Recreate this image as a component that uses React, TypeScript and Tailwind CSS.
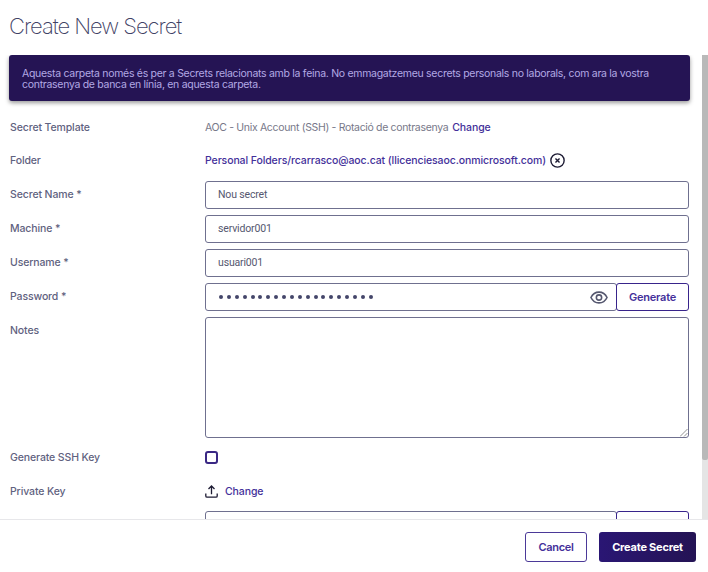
import type { ReactNode } from "react";

function Row({ label, className, children }: { label?: string; className: string; children: ReactNode }) {
  return (
    <div className={`flex shrink-0 ${className}`}>
      <div className="w-[195px] shrink-0 text-[10.500px] leading-[28px] font-medium tracking-[-0.12px] text-[#5f6280]">{label}</div>
      <div className="flex min-w-0 flex-1 items-center">{children}</div>
    </div>
  );
}

const box = "rounded-[3px] border border-[#6f708f] bg-white";

function TextField({ value }: { value: string }) {
  return (
    <div className={`flex h-7 w-full items-center px-3 font-[Roboto,sans-serif] text-[10.500px] tracking-[-0.16px] text-[#55576f] ${box}`}>
      {value}
    </div>
  );
}

function CloseIcon() {
  return (
    <svg className="ml-[4px] h-[15px] w-[15px]" viewBox="0 0 14 14" fill="none" stroke="#1d1b33" strokeWidth="1.3">
      <circle cx="7" cy="7" r="6.2" />
      <path d="M5.100 5.100l3.800 3.800M8.900 5.100l-3.800 3.800" strokeWidth="1.3" />
    </svg>
  );
}

function EyeIcon() {
  return (
    <svg className="h-[13px] w-[18px]" viewBox="0 0 17 12" fill="none" stroke="#55576f" strokeWidth="1.5">
      <path d="M.9 6C2.5 2.7 5.2.9 8.500.9S14.500 2.7 16.100 6c-1.6 3.3-4.3 5.1-7.6 5.1S2.5 9.300.9 6Z" />
      <circle cx="8.5" cy="6" r="2.5" />
    </svg>
  );
}

function UploadIcon() {
  return (
    <svg className="mr-[7px] h-[13px] w-[13px]" viewBox="0 0 13 13" fill="none" stroke="#1d1b33" strokeWidth="1.3">
      <path d="M6.500 9.300V1.200M3.500 4L6.500 1l3 3" />
      <path d="M.8 8.600v2.300q0 1.300 1.300 1.300h8.800q1.300 0 1.300-1.300V8.600" />
    </svg>
  );
}

export default function App() {
  return (
    <div className="flex h-[572px] w-[708px] flex-col overflow-hidden bg-white font-[Inter,sans-serif] text-[11px]">
      <header className="h-[55px] shrink-0 pt-[9px] pl-[9px]">
        <h1 className="w-fit text-[22px] leading-[34px] font-extralight tracking-[-1.03px] text-[#3f4265]">Create New Secret</h1>
      </header>

      <main className="flex h-[464px] shrink-0 overflow-hidden">
        <div className="flex w-[702px] shrink-0 flex-col pr-[13px] pl-[10px]">
          <div className="-mr-px -ml-px h-[46px] shrink-0 rounded-[3px] bg-[#251454] pt-[13px] pl-[13px] text-[10.500px] leading-[11px] text-[#b3a9e4] shadow-[0_2px_4px_rgba(0,0,0,0.4)]">
            <p className="w-[640px] tracking-[-0.29px]">
              Aquesta carpeta només és per a Secrets relacionats amb la feina. No emmagatzemeu secrets personals no laborals, com ara la vostra contrasenya de banca en línia, en aquesta carpeta.
            </p>
          </div>

          <Row label="Secret Template" className="mt-[13px] h-[26px]">
            <span className="pt-0.5 text-[10.500px] leading-[18px] whitespace-nowrap tracking-[-0.33px] text-[#777889]">AOC - Unix Account (SSH) - Rotació de contrasenya</span>
            <span className="ml-1 pt-0.5 text-[10.500px] leading-[18px] font-medium tracking-[-0.1px] text-[#43309a]">Change</span>
          </Row>
          <Row label="Folder" className="mt-[7px] h-[26px]">
            <span className="pt-0.5 text-[10.500px] leading-[18px] whitespace-nowrap font-medium tracking-[-0.1px] text-[#43309a]">Personal Folders/rcarrasco@aoc.cat (llicenciesaoc.onmicrosoft.com)</span>
            <CloseIcon />
          </Row>
          <Row label="Secret Name *" className="mt-2 h-7"><TextField value="Nou secret" /></Row>
          <Row label="Machine *" className="mt-1.5 h-7"><TextField value="servidor001" /></Row>
          <Row label="Username *" className="mt-1.5 h-7"><TextField value="usuari001" /></Row>
          <Row label="Password *" className="mt-1.5 h-7">
            <div className={`flex h-7 w-[412px] items-center justify-between pr-2 pl-[13px] ${box}`}>
              <div className="flex gap-[3.880px]">
                {Array.from({ length: 20 }, (_, i) => (
                  <i key={i} className="h-1 w-1 rounded-full bg-[#44466a]" />
                ))}
              </div>
              <EyeIcon />
            </div>
            <button className="-ml-px h-7 w-[73px] rounded-[3px] border border-[#38248b] bg-white font-semibold tracking-[-0.2px] text-[#43309a]">Generate</button>
          </Row>
          <Row label="Notes" className="mt-1.5 h-[121px]">
            <div className={`flex h-[121px] w-full items-end justify-end ${box}`}>
              <svg className="h-2 w-2" viewBox="0 0 8 8" stroke="#777" strokeWidth=".8">
                <path d="M0 7.500L7.500 0M4 7.500L7.500 4" />
              </svg>
            </div>
          </Row>
          <Row label="Generate SSH Key" className="mt-1.5 h-[26px]">
            <span className="h-[13px] w-[13px] rounded-[3px] border-2 border-[#3a2884]" />
          </Row>
          <Row label="Private Key" className="mt-2 h-[26px]">
            <UploadIcon />
            <span className="pt-0.5 text-[10.500px] leading-[18px] font-medium tracking-[-0.1px] text-[#43309a]">Change</span>
          </Row>
          <Row className="mt-[7px] h-7">
            <div className={`h-7 w-[412px] ${box}`} />
            <div className="-ml-px h-7 w-[73px] rounded-[3px] border border-[#38248b]" />
          </Row>
        </div>
        <div className="w-1.5 shrink-0 bg-[#e5e5e5]">
          <div className="h-[405px] rounded-b-[2px] bg-[#b9b9b9]" />
        </div>
      </main>

      <footer className="flex flex-1 items-start justify-end gap-3 border-t border-[#e7e7ea] pt-3 pr-3">
        <button className="h-[30px] w-[62px] rounded-[3px] border border-[#4b3998] font-semibold tracking-[-0.3px] text-[#43309a]">Cancel</button>
        <button className="h-[30px] w-[97px] rounded-[3px] bg-linear-to-r from-[#2a1674] to-[#241354] font-bold tracking-[-0.22px] text-white">Create Secret</button>
      </footer>
    </div>
  );
}
